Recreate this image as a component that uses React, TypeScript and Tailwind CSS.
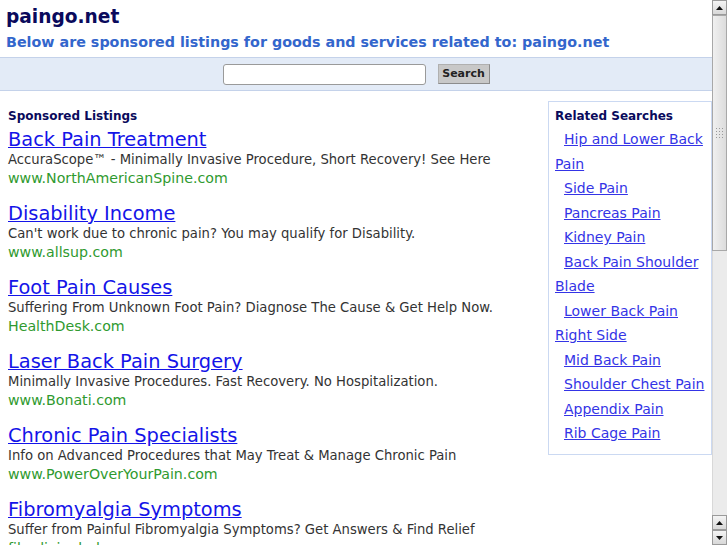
import React from 'react';

const listings = [
  {
    title: 'Back Pain Treatment',
    desc: 'AccuraScope™  - Minimally Invasive Procedure, Short Recovery! See Here',
    url: 'www.NorthAmericanSpine.com',
  },
  {
    title: 'Disability Income',
    desc: "Can't work due to chronic pain? You may qualify for Disability.",
    url: 'www.allsup.com',
  },
  {
    title: 'Foot Pain Causes',
    desc: 'Suffering From Unknown Foot Pain? Diagnose The Cause & Get Help Now.',
    url: 'HealthDesk.com',
  },
  {
    title: 'Laser Back Pain Surgery',
    desc: 'Minimally Invasive Procedures. Fast Recovery. No Hospitalization.',
    url: 'www.Bonati.com',
  },
  {
    title: 'Chronic Pain Specialists',
    desc: 'Info on Advanced Procedures that May Treat & Manage Chronic Pain',
    url: 'www.PowerOverYourPain.com',
  },
  {
    title: 'Fibromyalgia Symptoms',
    desc: 'Suffer from Painful Fibromyalgia Symptoms? Get Answers & Find Relief',
    url: 'fibrolivinghelp.com',
  },
];

const related = [
  'Hip and Lower Back Pain',
  'Side Pain',
  'Pancreas Pain',
  'Kidney Pain',
  'Back Pain Shoulder Blade',
  'Lower Back Pain Right Side',
  'Mid Back Pain',
  'Shoulder Chest Pain',
  'Appendix Pain',
  'Rib Cage Pain',
];

// old gtk style scrollbar, drawn since the page is clipped
const ScrollButton = ({ up }: { up: boolean }) => (
  <div className="flex h-[15px] w-[15px] items-center justify-center border border-[#9a9a9a] bg-gradient-to-b from-[#f4f4f4] to-[#d8d8d8]">
    <svg width="7" height="4" viewBox="0 0 7 4">
      {up ? <polygon points="0,4 7,4 3.5,0" fill="#111" /> : <polygon points="0,0 7,0 3.5,4" fill="#111" />}
    </svg>
  </div>
);

const Scrollbar = () => (
  <div className="flex h-full w-[15px] flex-col bg-[#ebebeb]">
    <ScrollButton up />
    <div className="flex h-[236px] w-[15px] items-center justify-center border border-[#a8a8a8] bg-gradient-to-r from-[#f0f0f0] to-[#dcdcdc]">
      <div className="grid grid-cols-3 gap-[2px]">
        {Array.from({ length: 12 }).map((_, i) => (
          <div key={i} className="h-px w-px bg-[#999]" />
        ))}
      </div>
    </div>
    <div className="flex-1 border-l border-[#d8d8d8]" />
    <ScrollButton up />
    <ScrollButton up={false} />
  </div>
);

export default function App() {
  return (
    <div className="flex h-[545px] w-[727px] overflow-hidden bg-white font-['DejaVu_Sans',sans-serif]">
      <div className="min-w-0 flex-1">
        {/* Header */}
        <div className="px-[6px] pt-[6px]">
          <h1 className="text-[18.6px] font-bold leading-[22px] text-[#0a0a5c]">paingo.net</h1>
          <p className="mt-[4px] text-[14.3px] font-bold leading-[20px] text-[#3366cc]">
            Below are sponsored listings for goods and services related to: paingo.net
          </p>
        </div>

        {/* Search band */}
        <div className="mt-[5px] flex h-[34px] items-center justify-center gap-[12px] border-y border-[#c4d2ea] bg-[#e3ebf7]">
          <input className="h-[21px] w-[203px] rounded-[3px] border border-[#9a9a9a] bg-white" />
          <button className="h-[20px] w-[52px] border border-[#b0b0b0] border-b-[#8c8c8c] border-r-[#8c8c8c] bg-[#c8c8c8] text-[11px] font-bold text-[#222]">
            Search
          </button>
        </div>

        <div className="flex">
          {/* Sponsored listings */}
          <div className="min-w-0 flex-1 pl-[8px] pt-[17px]">
            <div className="text-[12px] font-bold leading-[16px] text-[#0a0a5c]">Sponsored Listings</div>
            <div className="mt-[5px]">
              {listings.map((l) => (
                <div key={l.title} className="mb-[16px]">
                  <a href="#" className="block w-fit text-[19.4px] leading-[22px] text-[#1414e8] underline">
                    {l.title}
                  </a>
                  <div className="text-[13.2px] leading-[18px] text-[#333]">{l.desc}</div>
                  <div className="text-[14.2px] leading-[18px] text-[#2f9a2f]">{l.url}</div>
                </div>
              ))}
            </div>
          </div>

          {/* Related searches */}
          <div className="mt-[10px] w-[164px] self-start border border-[#cbd9f2] px-[6px] pb-[8px] pt-[6px]">
            <div className="text-[12px] font-bold leading-[16px] text-[#0a0a5c]">Related Searches</div>
            <div className="mt-[3px]">
              {related.map((r) => (
                <div key={r} className="indent-[9px] text-[14px] leading-[24.5px]">
                  <a href="#" className="text-[#3434e6] underline">
                    {r}
                  </a>
                </div>
              ))}
            </div>
          </div>
        </div>
      </div>
      <Scrollbar />
    </div>
  );
}
